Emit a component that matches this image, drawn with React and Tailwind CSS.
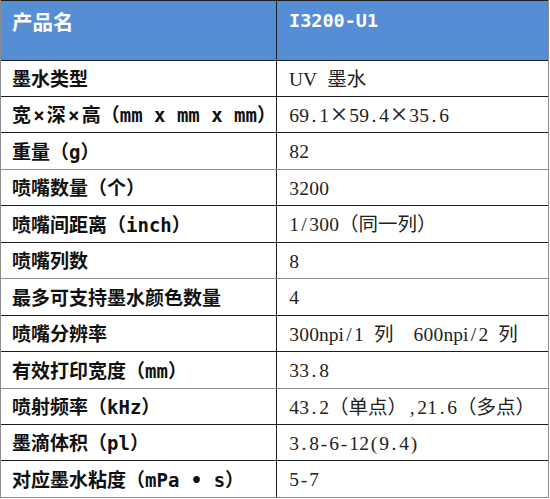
const X = ({ w = "w-[19px]" }) => <span className={`inline-block ${w} text-center`}>×</span>;

// SimSun-style grid: digits and punctuation sit in half-width cells
const Grid = ({ text }) => (
  <span>
    {[...text].map((c, i) =>
      c === "×" ? (
        <span key={i} className="inline-block w-[20px] text-center text-[30px] leading-[20px] align-[-2px]">
          ×
        </span>
      ) : /[0-9 .,/()\-]/.test(c) ? (
        <span key={i} className="inline-block w-[10px] text-center">
          {c === " " ? "\u00a0" : c}
        </span>
      ) : (
        c
      )
    )}
  </span>
);

const rows = [
  { label: "墨水类型", value: "UV 墨水", h: "h-[36px]" },
  {
    label: (
      <>
        宽<X />深<X />高（mm x mm x mm）
      </>
    ),
    value: "69.1×59.4×35.6",
    h: "h-[36px]",
  },
  { label: "重量（g）", value: "82", h: "h-[37px]", line: "border-[#8c8c8c]" },
  { label: "喷嘴数量（个）", value: "3200", h: "h-[36px]" },
  { label: "喷嘴间距离（inch）", value: "1/300（同一列）", h: "h-[37px]" },
  { label: "喷嘴列数", value: "8", h: "h-[36px]", line: "border-[#8c8c8c]" },
  { label: "最多可支持墨水颜色数量", value: "4", h: "h-[37px]" },
  { label: "喷嘴分辨率", value: "300npi/1 列  600npi/2 列", h: "h-[36px]" },
  { label: "有效打印宽度（mm）", value: "33.8", h: "h-[37px]", line: "border-[#8c8c8c]" },
  { label: "喷射频率（kHz）", value: "43.2（单点）,21.6（多点）", h: "h-[36px]" },
  { label: "墨滴体积（pl）", value: "3.8-6-12(9.4)", h: "h-[36px]" },
  { label: "对应墨水粘度（mPa • s）", value: "5-7", h: "h-[37px]", line: "border-[#8c8c8c]" },
];

export default function App() {
  return (
    <div className="w-[550px] h-[499px] bg-white">
      <div className="w-[549px] border-x border-[#8c8c8c]">
        <div className="flex h-[61px] border-y border-[#1f1f1f] bg-[#558ed5] text-[20px] font-bold leading-[30px] text-white">
          <div className="w-[276px] border-r border-[#1f1f1f] pl-[11px] pt-[5px] text-[20.5px] font-['Noto_Sans_CJK_SC',sans-serif]">
            产品名
          </div>
          <div className="flex-1 pl-[12px] pt-[5px] text-[18.5px] font-['DejaVu_Sans_Mono',monospace]">
            I3200-U1
          </div>
        </div>
        {rows.map((r, i) => (
          <div
            key={i}
            className={`flex ${r.h} border-b ${r.line || "border-[#1f1f1f]"}`}
          >
            <div className="flex w-[276px] items-center whitespace-nowrap border-r border-[#1f1f1f] pl-[11px] pt-[2px] text-[19px] font-bold text-[#111] font-['DejaVu_Sans_Mono','Noto_Sans_CJK_SC',monospace]">
              {r.label}
            </div>
            <div className="flex flex-1 items-center whitespace-nowrap pl-[12px] pt-[2px] text-[19.5px] text-[#222] font-['Liberation_Serif','Noto_Sans_CJK_SC',serif]">
              <Grid text={r.value} />
            </div>
          </div>
        ))}
      </div>
    </div>
  );
}
